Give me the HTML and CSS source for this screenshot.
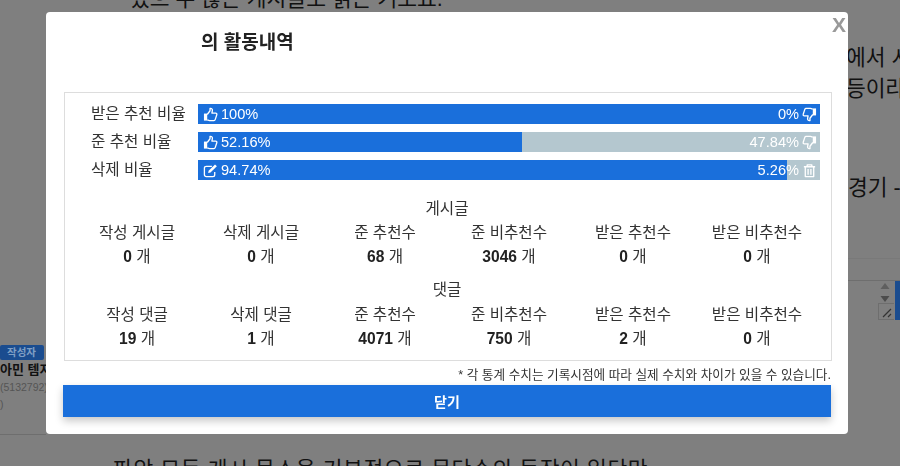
FILE: index.html
```html
<!DOCTYPE html>
<html lang="ko">
<head>
<meta charset="utf-8">
<title>활동내역</title>
<link rel="stylesheet" href="styles.css">
</head>
<body>
<div class="page">
  <p class="bg-text bt-top">있으 수 많은 게시글도 읽는 거도요.</p>
  <p class="bg-text bt-r1">에서 시</p>
  <p class="bg-text bt-r2">등이라</p>
  <p class="bg-text bt-r3">경기 -</p>
  <p class="bg-text bt-bottom">파악 모든 게시 목소을 기본적으로 문단수의 동작이 일단만</p>
  <div class="author">
    <span class="badge">작성자</span>
    <span class="author-name">아민 템지</span>
    <span class="author-id">(5132792)</span>
    <span class="author-id">)</span>
  </div>
  <div class="rule rule-left"></div>
  <div class="rule rule-faint"></div>
  <div class="rule rule-right"></div>
  <div class="scroller">
    <svg class="spin" width="12" height="24" viewBox="0 0 12 24"><path d="M6 3l4.500 6h-9z" fill="#5f5f5f"/><path d="M1.500 16h9L6 22z" fill="#4c4c4c"/></svg>
    <div class="grip"><svg width="12" height="12" viewBox="0 0 12 12"><path d="M2 11l8-8M7 11l3-3" stroke="#333" stroke-width="1.200"/></svg></div>
    <div class="blue-edge"></div>
  </div>
</div>

<div class="modal">
  <button class="close" type="button">X</button>
  <h2 class="title">의 활동내역</h2>
  <section class="panel">
    <div class="bars">
      <div class="bar-row">
        <span class="bar-label">받은 추천 비율</span>
        <div class="bar">
          <div class="fill" style="width:100%"></div>
          <div class="bar-text">
            <span class="side"><svg class="ic" viewBox="0 0 16 16"><path class="cuff" d="M1 7h3.500v7.500H1z"/><path class="hand" d="M4.500 8l3-4V1.500c1.700-.3 2.800.8 2.500 2.400L9.500 6.500h4c1 0 1.500.9 1.200 1.700L13 13.500c-.2.600-.7 1-1.300 1H7c-1 0-1.600-.5-2.500-.8"/></svg>100%</span>
            <span class="side">0%<svg class="ic" viewBox="0 0 16 16"><path class="cuff" d="M15 9h-3.500V1.500H15z"/><path class="hand" d="M11.500 8l-3 4v2.500c-1.700.3-2.800-.8-2.500-2.400l.5-2.600h-4c-1 0-1.500-.9-1.200-1.700L3 2.500c.2-.6.700-1 1.300-1H9c1 0 1.600.5 2.500.8"/></svg></span>
          </div>
        </div>
      </div>
      <div class="bar-row">
        <span class="bar-label">준 추천 비율</span>
        <div class="bar">
          <div class="fill" style="width:52.16%"></div>
          <div class="bar-text">
            <span class="side"><svg class="ic" viewBox="0 0 16 16"><path class="cuff" d="M1 7h3.500v7.500H1z"/><path class="hand" d="M4.500 8l3-4V1.500c1.700-.3 2.800.8 2.500 2.400L9.500 6.500h4c1 0 1.500.9 1.200 1.700L13 13.500c-.2.600-.7 1-1.300 1H7c-1 0-1.600-.5-2.500-.8"/></svg>52.16%</span>
            <span class="side">47.84%<svg class="ic" viewBox="0 0 16 16"><path class="cuff" d="M15 9h-3.500V1.500H15z"/><path class="hand" d="M11.500 8l-3 4v2.500c-1.700.3-2.800-.8-2.500-2.400l.5-2.600h-4c-1 0-1.500-.9-1.200-1.700L3 2.500c.2-.6.700-1 1.300-1H9c1 0 1.600.5 2.500.8"/></svg></span>
          </div>
        </div>
      </div>
      <div class="bar-row">
        <span class="bar-label">삭제 비율</span>
        <div class="bar">
          <div class="fill" style="width:94.74%"></div>
          <div class="bar-text">
            <span class="side"><svg class="ic" viewBox="0 0 16 16"><path class="hand" d="M12.500 9.500v3a2 2 0 0 1-2 2h-7a2 2 0 0 1-2-2v-7a2 2 0 0 1 2-2h6"/><path class="cuff" d="M6 8.200L12.800 1.500l2 2L8 10.200l-2.500.5z"/></svg>94.74%</span>
            <span class="side">5.26%<svg class="ic" viewBox="0 0 16 16"><path class="hand" d="M2 4h12M5.500 4V2h5v2M3.500 4v10.500h9V4M6.500 6.500v6M9.500 6.500v6"/></svg></span>
          </div>
        </div>
      </div>
    </div>

    <h3 class="group-title first">게시글</h3>
    <div class="stats">
      <div class="stat"><span>작성 게시글</span><span class="val"><b>0</b> 개</span></div>
      <div class="stat"><span>삭제 게시글</span><span class="val"><b>0</b> 개</span></div>
      <div class="stat"><span>준 추천수</span><span class="val"><b>68</b> 개</span></div>
      <div class="stat"><span>준 비추천수</span><span class="val"><b>3046</b> 개</span></div>
      <div class="stat"><span>받은 추천수</span><span class="val"><b>0</b> 개</span></div>
      <div class="stat"><span>받은 비추천수</span><span class="val"><b>0</b> 개</span></div>
    </div>

    <h3 class="group-title">댓글</h3>
    <div class="stats">
      <div class="stat"><span>작성 댓글</span><span class="val"><b>19</b> 개</span></div>
      <div class="stat"><span>삭제 댓글</span><span class="val"><b>1</b> 개</span></div>
      <div class="stat"><span>준 추천수</span><span class="val"><b>4071</b> 개</span></div>
      <div class="stat"><span>준 비추천수</span><span class="val"><b>750</b> 개</span></div>
      <div class="stat"><span>받은 추천수</span><span class="val"><b>2</b> 개</span></div>
      <div class="stat"><span>받은 비추천수</span><span class="val"><b>0</b> 개</span></div>
    </div>
  </section>
  <p class="note">* 각 통계 수치는 기록시점에 따라 실제 수치와 차이가 있을 수 있습니다.</p>
  <button class="confirm" type="button">닫기</button>
</div>
</body>
</html>
```
FILE: styles.css
```css
* { box-sizing: border-box; }
html, body { margin: 0; height: 100%; overflow: hidden; }
body {
  background: #7f7f7f;
  font-family: "Liberation Sans", "Noto Sans CJK KR", sans-serif;
  color: #222;
}
.page { position: relative; width: 900px; height: 466px; overflow: hidden; }
.bg-text {
  position: absolute;
  margin: 0;
  font-size: 21.500px;
  line-height: 26px;
  color: #111;
  white-space: nowrap;
}
.bt-top { left: 130px; top: -14px; }
.bt-r1 { left: 846px; top: 45px; }
.bt-r2 { left: 846px; top: 76px; }
.bt-r3 { left: 848px; top: 175px; }
.bt-bottom { left: 113px; top: 457px; letter-spacing: .6px; }
.author { position: absolute; left: 0; top: 345px; width: 46px; display: flex; flex-direction: column; align-items: flex-start; white-space: nowrap; overflow: hidden; }
.badge {
  width: 44px;
  height: 15px;
  background: #1a4c8f;
  color: #7f9fc4;
  border-radius: 2px;
  font-size: 10.500px;
  font-weight: 700;
  line-height: 15px;
  text-align: right;
  padding-right: 8px;
}
.author-name { font-size: 13px; font-weight: 700; line-height: 18px; margin-top: 1px; color: #111; }
.author-id { font-size: 10.500px; line-height: 16px; color: #555; }
.author-id + .author-id { margin-top: 1px; }
.rule { position: absolute; height: 1px; background: #6e6e6e; }
.rule-left { left: 0; top: 434px; width: 46px; }
.rule-faint { left: 848px; top: 258px; width: 52px; background: #797979; }
.rule-right { left: 848px; top: 280px; width: 52px; }
.scroller { position: absolute; left: 848px; top: 280px; width: 52px; height: 40px; }
.spin { position: absolute; left: 31px; top: 0; }
.grip { position: absolute; left: 30px; top: 23px; width: 16px; height: 17px; border: 1px solid #6e6e6e; border-right: 0; display: flex; align-items: center; justify-content: center; }
.blue-edge { position: absolute; left: 47px; top: 1px; width: 5px; height: 39px; background: #1a4c8f; }

.modal {
  position: fixed;
  left: 46px;
  top: 12px;
  width: 802px;
  height: 422px;
  background: #fff;
  border-radius: 4px;
  padding: 0 17px;
}
.close {
  position: absolute;
  right: 2px;
  top: 0;
  padding: 0;
  border: 0;
  background: none;
  font: 700 21px/25px "Liberation Sans", sans-serif;
  color: #999;
  width: 14px;
}
.title {
  margin: 0;
  padding: 19px 0 0 138px;
  height: 80px;
  font-size: 19px;
  line-height: 24px;
  font-weight: 700;
  color: #222;
}
.panel { width: 768px; height: 269px; border: 1px solid #ddd; padding: 11px 11px 0 26px; margin-left: 1px; }
.bars { display: flex; flex-direction: column; gap: 8px; }
.bar-row { display: flex; align-items: center; height: 20px; }
.bar-label { width: 107px; font-size: 15.600px; line-height: 20px; color: #333; white-space: nowrap; }
.bar { position: relative; flex: 1; height: 20px; background: #b4c7cf; }
.fill { height: 100%; background: #1a6fdb; }
.bar-text {
  position: absolute;
  inset: 0;
  display: flex;
  justify-content: space-between;
  align-items: center;
  padding: 0 3px 0 5px;
  color: #fff;
  font-size: 14.600px;
  line-height: 20px;
}
.side { display: flex; align-items: center; gap: 3px; }
.ic { width: 15px; height: 15px; flex: none; }
.hand { fill: none; stroke: #fff; stroke-width: 1.400; stroke-linejoin: round; }
.cuff { fill: #fff; }
.group-title {
  margin: 0 0 0 -17px;
  padding-top: 7px;
  font-size: 15.600px;
  font-weight: 400;
  line-height: 26px;
  text-align: center;
  color: #333;
}
.group-title.first { padding-top: 16px; }
.stats { display: grid; grid-template-columns: repeat(6, 124px); margin: 1px 0 0 -16px; }
.first + .stats { margin-top: 0; }
.stat { display: flex; flex-direction: column; align-items: center; font-size: 15.600px; line-height: 22px; color: #333; white-space: nowrap; }
.val { line-height: 26px; }
.val b { color: #222; }
.note { margin: 4px 0 0; height: 20px; padding-top: 2px; font-size: 12.650px; line-height: 16px; text-align: right; color: #333; white-space: nowrap; }
.confirm {
  display: block;
  width: 768px;
  height: 32px;
  margin: 0;
  border: 0;
  background: #1a6fdb;
  color: #fff;
  font: 700 14px/32px "Liberation Sans", "Noto Sans CJK KR", sans-serif;
  box-shadow: 0 4px 8px rgba(0,0,0,.22);
}
```
